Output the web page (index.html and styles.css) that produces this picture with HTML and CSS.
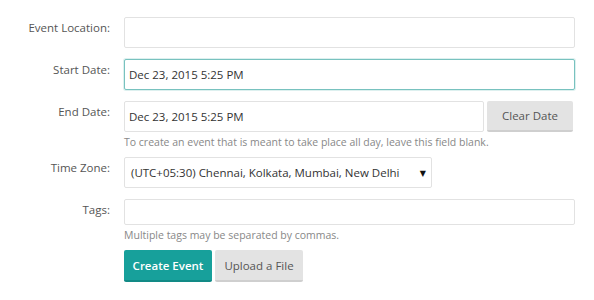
FILE: index.html
```html
<!DOCTYPE html>
<html>
<head>
<meta charset="utf-8">
<link rel="stylesheet" href="styles.css">
</head>
<body>
<form class="form">
  <div class="row">
    <label class="label">Event Location:</label>
    <div class="field"><input class="input" type="text"></div>
  </div>
  <div class="row">
    <label class="label">Start Date:</label>
    <div class="field"><input class="input focused" type="text" value="Dec 23, 2015 5:25 PM"></div>
  </div>
  <div class="row has-help">
    <label class="label">End Date:</label>
    <div class="field">
      <div class="inline">
        <input class="input grow" type="text" value="Dec 23, 2015 5:25 PM">
        <button type="button" class="btn btn-gray clear">Clear Date</button>
      </div>
      <div class="help">To create an event that is meant to take place all day, leave this field blank.</div>
    </div>
  </div>
  <div class="row">
    <label class="label">Time Zone:</label>
    <div class="field">
      <div class="select">
        <span>(UTC+05:30) Chennai, Kolkata, Mumbai, New Delhi</span>
        <span class="arrow">&#9660;</span>
      </div>
    </div>
  </div>
  <div class="row has-help">
    <label class="label">Tags:</label>
    <div class="field">
      <input class="input tags" type="text">
      <div class="help">Multiple tags may be separated by commas.</div>
    </div>
  </div>
  <div class="row">
    <div class="label"></div>
    <div class="field actions">
      <button type="button" class="btn btn-teal">Create Event</button>
      <button type="button" class="btn btn-gray">Upload a File</button>
    </div>
  </div>
</form>
</body>
</html>
```
FILE: styles.css
```css
html, body {
  margin: 0;
  background: #fff;
}
body {
  font-family: "Open Sans", "DejaVu Sans", sans-serif;
  font-size: 12px;
  color: #555;
}
.form {
  padding-top: 17px;
  width: 575px;
}
.row {
  display: grid;
  grid-template-columns: 110px 1fr;
  column-gap: 14px;
  margin-bottom: 11px;
}
.row.has-help {
  margin-bottom: 7px;
}
.label {
  text-align: right;
  line-height: 16px;
  padding-top: 3px;
  color: #555;
  font-size: 11.5px;
}
.field {
  min-width: 0;
}
.input {
  display: block;
  box-sizing: border-box;
  width: 100%;
  height: 31px;
  margin: 0;
  padding: 0 4px;
  border: 1px solid #e2e2e2;
  border-radius: 2px;
  background: #fff;
  font-family: inherit;
  font-size: 11.5px;
  color: #333;
  outline: none;
}
.input.focused {
  border-color: #78c2bf;
  box-shadow: 0 0 0 1px rgba(120, 194, 191, 0.25);
}
.input.tags {
  height: 26px;
}
.inline {
  display: flex;
  gap: 3px;
}
.grow {
  flex: 1;
  width: auto;
}
.help {
  margin-top: 2px;
  line-height: 16px;
  font-size: 10.5px;
  color: #888;
  white-space: nowrap;
}
.select {
  box-sizing: border-box;
  width: 308px;
  height: 31px;
  border: 1px solid #e2e2e2;
  border-radius: 2px;
  display: flex;
  align-items: center;
  justify-content: space-between;
  padding: 0 5px 0 6px;
  font-size: 11.5px;
  color: #333;
}
.arrow {
  font-size: 8px;
  color: #111;
}
.btn {
  box-sizing: border-box;
  height: 32px;
  border: none;
  border-radius: 2px;
  font-family: inherit;
  font-size: 11.5px;
  padding: 0;
  cursor: pointer;
}
.btn-gray {
  background: #e3e3e3;
  color: #555;
  border-bottom: 2px solid #cfcfcf;
}
.btn-teal {
  background: #17a09b;
  color: #fff;
  font-weight: 600;
  border-bottom: 2px solid #128a86;
}
.clear {
  width: 86px;
  height: 31px;
  flex: none;
  margin-right: 2px;
}
.actions {
  display: flex;
  gap: 3px;
}
.actions .btn {
  width: 88px;
}
```
